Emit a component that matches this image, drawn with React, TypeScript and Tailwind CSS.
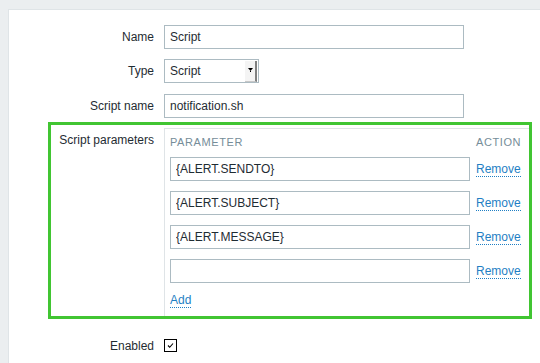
import React from 'react';

const params = ['{ALERT.SENDTO}', '{ALERT.SUBJECT}', '{ALERT.MESSAGE}', ''];

const TextBox: React.FC<{ value: string; width: string }> = ({ value, width }) => (
  <input
    readOnly
    value={value}
    className={`${width} h-[24px] border border-[#acbbc2] bg-white px-[5px] text-[12px] text-[#1f2c33] outline-none font-['Liberation_Sans',Arial,sans-serif]`}
  />
);

const LinkText: React.FC<{ children: React.ReactNode }> = ({ children }) => (
  <span className="block leading-[14px] text-[#1f7fc4] border-b border-dotted border-[#1f7fc4] cursor-pointer">
    {children}
  </span>
);

export default function App() {
  return (
    <div className="w-[540px] h-[363px] overflow-hidden bg-[#ebeef0] pt-[9px] pl-[8px] font-['Liberation_Sans',Arial,sans-serif] text-[12px] leading-[14px] text-[#1f2c33]">
      <div className="relative h-full bg-white border-t border-l border-[#dfe4e7] pt-[15px]">
        {/* Name */}
        <div className="flex items-center h-[24px]">
          <label className="w-[155px] shrink-0 pr-[10px] text-right">Name</label>
          <TextBox value="Script" width="w-[300px]" />
        </div>

        {/* Type */}
        <div className="flex items-center h-[24px] mt-[10px]">
          <label className="w-[155px] shrink-0 pr-[10px] text-right">Type</label>
          <div className="flex items-center w-[95px] h-[24px] border border-[#acbbc2] bg-white">
            <span className="flex-1 pl-[5px]">Script</span>
            <div className="flex items-center justify-center w-[12px] h-[21px] mr-[1px] bg-[#f4f4f4] border-r-2 border-b border-r-[#808080] border-b-[#c8c8c8]">
              <svg width="5" height="5" viewBox="0 0 5 5">
                <polygon points="0,0 5,0 2.5,3" fill="#000" />
                <rect x="2" y="3" width="1" height="1" fill="#000" />
              </svg>
            </div>
          </div>
        </div>

        {/* Script name */}
        <div className="flex items-center h-[24px] mt-[11px]">
          <label className="w-[155px] shrink-0 pr-[10px] text-right">Script name</label>
          <TextBox value="notification.sh" width="w-[300px]" />
        </div>

        {/* Script parameters */}
        <div className="flex items-start mt-[10px]">
          <label className="w-[155px] shrink-0 pr-[10px] pt-[5px] text-right">Script parameters</label>
          <div className="w-[367px] border border-[#dfe4e7] px-[5px] pt-[6px] pb-[10px]">
            <div className="flex text-[11px] tracking-[0.6px] text-[#768d99] uppercase">
              <span className="w-[300px]">Parameter</span>
              <span className="ml-[6px]">Action</span>
            </div>
            <div className="flex flex-col gap-[10px] mt-[8px]">
              {params.map((p, i) => (
                <div key={i} className="flex items-center h-[24px]">
                  <TextBox value={p} width="w-[300px]" />
                  <div className="ml-[6px]">
                    <LinkText>Remove</LinkText>
                  </div>
                </div>
              ))}
            </div>
            <div className="flex mt-[10px]">
              <LinkText>Add</LinkText>
            </div>
          </div>
        </div>

        {/* Enabled */}
        <div className="flex items-center h-[13px] mt-[20px]">
          <label className="w-[155px] shrink-0 pr-[10px] text-right">Enabled</label>
          <div className="flex items-center justify-center w-[13px] h-[13px] border border-black bg-white">
            <svg width="9" height="9" viewBox="0 0 9 9">
              <path d="M2 4.5 L3.7 6.3 L7 2.5" stroke="#000" strokeWidth="1.1" fill="none" />
            </svg>
          </div>
        </div>

        {/* highlight frame */}
        <div className="pointer-events-none absolute left-[39px] top-[112px] w-[484px] h-[197px] border-[3px] border-[#41c532]" />
      </div>
    </div>
  );
}
